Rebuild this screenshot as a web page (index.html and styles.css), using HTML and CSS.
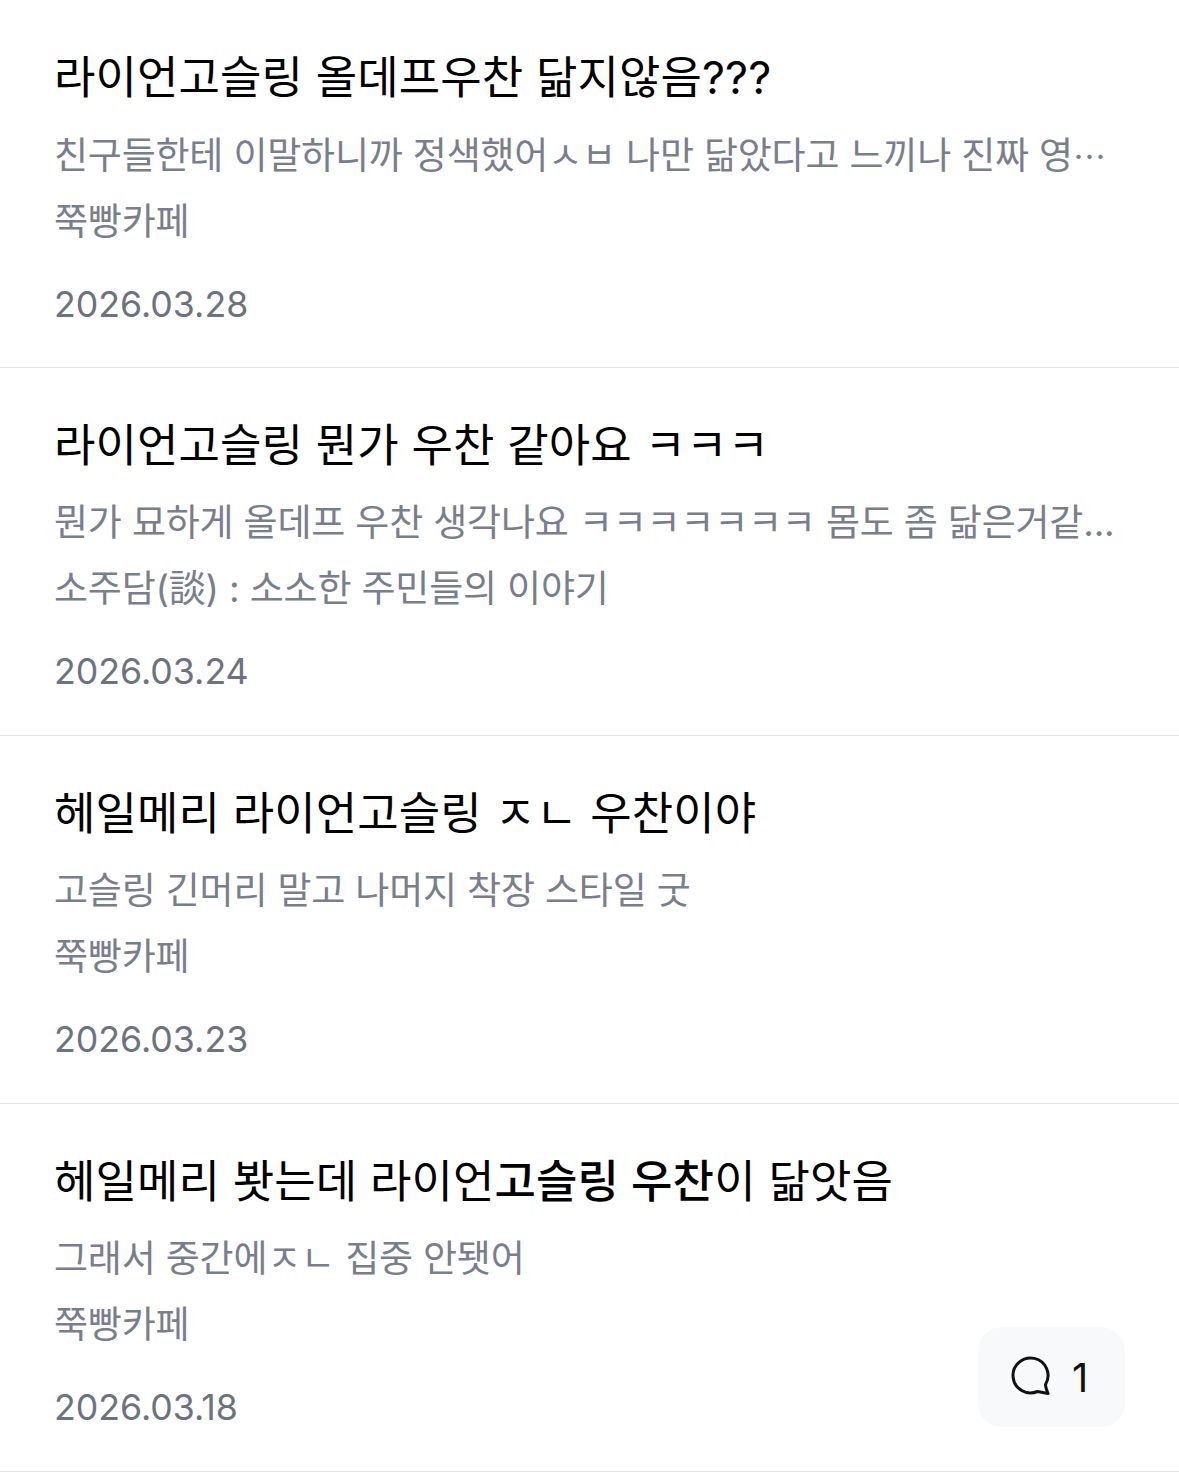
FILE: index.html
```html
<!DOCTYPE html>
<html lang="ko">
<head>
<meta charset="utf-8">
<title>검색 결과</title>
<link rel="stylesheet" href="styles.css">
</head>
<body>
<ul class="list">
<li class="item">
<h2 class="title">라이언고슬링 올데프우찬 닮지않음???</h2>
<p class="desc">친구들한테 이말하니까 정색했어ㅅㅂ 나만 닮았다고 느끼나 진짜 영<span class="ellipsis">…</span></p>
<p class="source">쭉빵카페</p>
<p class="date">2026.03.28</p>
</li>
<li class="item">
<h2 class="title">라이언고슬링 뭔가 우찬 같아요 ㅋㅋㅋ</h2>
<p class="desc">뭔가 묘하게 올데프 우찬 생각나요 ㅋㅋㅋㅋㅋㅋㅋ 몸도 좀 닮은거같...</p>
<p class="source">소주담(談) : 소소한 주민들의 이야기</p>
<p class="date">2026.03.24</p>
</li>
<li class="item">
<h2 class="title">헤일메리 라이언고슬링 ㅈㄴ 우찬이야</h2>
<p class="desc">고슬링 긴머리 말고 나머지 착장 스타일 굿</p>
<p class="source">쭉빵카페</p>
<p class="date">2026.03.23</p>
</li>
<li class="item">
<h2 class="title">헤일메리 봣는데 라이언<strong class="hit">고슬링 우찬</strong>이 닮앗음</h2>
<p class="desc">그래서 중간에ㅈㄴ 집중 안됏어</p>
<p class="source">쭉빵카페</p>
<p class="date">2026.03.18</p>
</li>
</ul>
<button class="comment" type="button">
<svg class="comment-icon" viewBox="0 0 44 44" width="44" height="44" aria-hidden="true"><path d="M27.5 36.500A17.500 17.500 0 1 1 35.500 29.500L36 33L38 38.500Z"/></svg>
<span>1</span>
</button>
</body>
</html>
```
FILE: styles.css
```css
* { box-sizing: border-box; }
html, body { margin: 0; padding: 0; background: #fff; }
body { font-family: "Inter", "Noto Sans CJK KR", sans-serif; width: 1179px; height: 1475px; overflow: hidden; position: relative; }
.list { list-style: none; margin: 0; padding: 0; }
.item { height: 368px; padding: 45px 54px 0; border-bottom: 1px solid #e5e7eb; }
.title { margin: 0; font-size: 45px; line-height: 66px; font-weight: 400; color: #000; letter-spacing: 0.1px; white-space: nowrap; }
.hit { font-weight: 500; }
.desc { margin: 16px 0 0; font-size: 37px; line-height: 56px; color: #787e8b; white-space: nowrap; overflow: hidden; letter-spacing: -0.2px; }
.ellipsis { font-family: "Noto Sans CJK JP", sans-serif; font-size: 33px; }
.source { margin: 10px 0 0; font-size: 37px; line-height: 56px; color: #787e8b; white-space: nowrap; letter-spacing: -0.2px; }
.date { margin: 26px 0 0; font-size: 35.7px; line-height: 56px; color: #6b7280; }
.comment { position: absolute; left: 978px; top: 1327px; width: 147px; height: 100px; border: 0; border-radius: 24px; background: #f8f9fb; display: flex; align-items: center; justify-content: flex-start; gap: 18px; font: 400 40px "Inter", sans-serif; color: #111; padding: 0 0 0 32px; }
.comment-icon { fill: none; stroke: #111; stroke-width: 3; stroke-linejoin: round; }
```
